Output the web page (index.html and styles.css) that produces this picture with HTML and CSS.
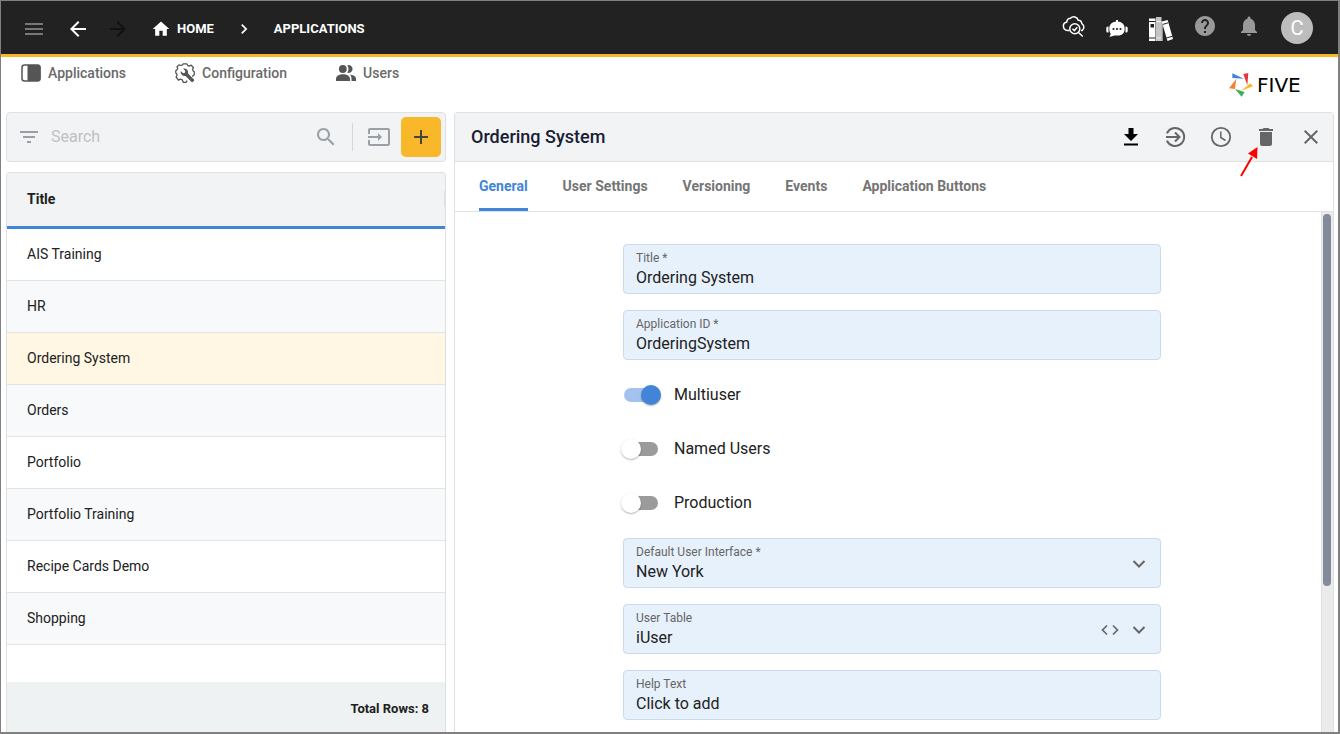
FILE: index.html
```html
<!DOCTYPE html>
<html lang="en">
<head>
    <meta charset="UTF-8">
    <meta name="viewport" content="width=device-width, initial-scale=1.0">
    <title>Applications | Five</title>
    <link rel="stylesheet" href="styles.css">
</head>
<body>
    <header class="topbar">
        <button class="icon-button menu-button" type="button" aria-label="Menu">
            <svg class="icon" viewBox="0 0 24 24"><path d="M3 18h18v-2H3v2zm0-5h18v-2H3v2zm0-7v2h18V6H3z"/></svg>
        </button>
        <button class="icon-button back-button" type="button" aria-label="Back">
            <svg class="icon" viewBox="0 0 24 24"><path d="M20 11H7.83l5.59-5.59L12 4l-8 8 8 8 1.41-1.41L7.83 13H20v-2z"/></svg>
        </button>
        <button class="icon-button forward-button" type="button" aria-label="Forward" disabled>
            <svg class="icon" viewBox="0 0 24 24"><path d="M12 4l-1.41 1.41L16.17 11H4v2h12.17l-5.58 5.59L12 20l8-8z"/></svg>
        </button>

        <nav class="breadcrumbs" aria-label="Breadcrumb">
            <a href="#">
                <svg class="icon icon-small" viewBox="0 0 24 24"><path d="M10 20v-6h4v6h5v-8h3L12 3 2 12h3v8z"/></svg>
                HOME
            </a>
            <svg class="icon icon-small" viewBox="0 0 24 24"><path d="M10 6L8.59 7.41 13.17 12l-4.58 4.59L10 18l6-6z"/></svg>
            <a href="#">APPLICATIONS</a>
        </nav>

        <div class="topbar-actions">
            <button class="icon-button" type="button" aria-label="Inspect">
                <svg class="icon icon-line icon-raised" viewBox="0 0 24 24">
                    <path d="M8.500 16.500H6.500a4.300 4.300 0 0 1-.7-8.500A3.700 3.700 0 0 1 9.500 4.200 4.600 4.600 0 0 1 17.200 6.200a3.300 3.300 0 0 1 3.600 3.400 4 4 0 0 1 .2 6.900h-1"/>
                    <circle cx="13.800" cy="14.800" r="5"/>
                    <path d="M11.500 14.800l1.800 1.800 3-3.400M17.500 18.500l4.300 4"/>
                </svg>
            </button>
            <button class="icon-button" type="button" aria-label="Chat assistant">
                <svg class="icon" viewBox="0 0 24 24">
                    <path d="M11 4h2v3h-2zM3.500 10.500v6H2.800a1.500 1.500 0 0 1-1.500-1.500v-3a1.500 1.500 0 0 1 1.500-1.500zM20.500 10.500v6h.7a1.500 1.500 0 0 0 1.500-1.500v-3a1.500 1.500 0 0 0-1.500-1.500z"/>
                    <path d="M12 5.500c5 0 7.700 3 7.700 7.200 0 4-2.500 6.800-6.700 6.800H9.500L4.500 21l1.300-3.300C4.700 16.500 4.300 15 4.300 12.700 4.300 8.500 7 5.500 12 5.500z"/>
                    <g fill="#222"><circle cx="8.500" cy="13" r="1.100"/><circle cx="12" cy="13" r="1.100"/><circle cx="15.500" cy="13" r="1.100"/></g>
                </svg>
            </button>
            <button class="icon-button" type="button" aria-label="Library">
                <svg class="icon books-icon" viewBox="0 0 24 24">
                    <path d="M0 1.500h6.500V24H0z"/>
                    <path fill="#c4c4c4" d="M7 0h5.500v24H7z"/>
                    <path d="M12.700 4.500l6-1.500L24 22l-5.500 2z"/>
                    <path fill="none" stroke="#222" d="M0 4.500h6.500M0 21h6.500M13.500 7.500l6-1.800M17.500 21l6-1.800"/>
                    <path fill="#222" d="M1.500 7h3.500v3.500H1.500z"/>
                    <path d="M12.500 4v20h1V6z"/>
                    <path fill="none" stroke="#fff" stroke-width=".8" d="M7.400 4.500h4.700M7.400 21h4.700"/>
                </svg>
            </button>
            <button class="icon-button muted" type="button" aria-label="Help">
                <svg class="icon icon-raised" viewBox="0 0 24 24"><path d="M12 2C6.480 2 2 6.480 2 12s4.480 10 10 10 10-4.480 10-10S17.520 2 12 2zm1 17h-2v-2h2v2zm2.070-7.750l-.9.920C13.450 12.900 13 13.500 13 15h-2v-.5c0-1.100.45-2.100 1.170-2.830l1.240-1.260c.37-.36.59-.86.59-1.410 0-1.100-.9-2-2-2s-2 .9-2 2H8c0-2.210 1.790-4 4-4s4 1.790 4 4c0 .88-.36 1.680-.93 2.250z"/></svg>
            </button>
            <button class="icon-button muted" type="button" aria-label="Notifications">
                <svg class="icon icon-raised" viewBox="0 0 24 24"><path d="M12 22c1.100 0 2-.9 2-2h-4c0 1.100.89 2 2 2zm6-6v-5c0-3.070-1.640-5.640-4.500-6.320V4c0-.83-.67-1.500-1.500-1.500s-1.500.67-1.500 1.500v.68C7.630 5.360 6 7.920 6 11v5l-2 2v1h16v-1l-2-2z"/></svg>
            </button>
            <button class="avatar" type="button" aria-label="Account">C</button>
        </div>
    </header>

    <div class="subbar">
        <nav class="main-nav" aria-label="Main">
            <a href="#">
                <svg class="icon icon-small" viewBox="0 0 20 20"><rect x="1" y="2" width="18" height="16" rx="2.500" fill="none" stroke="currentColor" stroke-width="1.500"/><path d="M6.500 2H17.500a2 2 0 0 1 2 2v12a2 2 0 0 1-2 2h-11z"/></svg>
                Applications
            </a>
            <a href="#">
                <svg class="icon icon-small" viewBox="0 0 20 20">
                    <path fill="none" stroke="currentColor" stroke-width="1.300" stroke-linejoin="round" d="M12 17.500l-.7 1.800H8.200l-.7-2.200-2-.9-2.100 1L1.100 14l1-2-.5-1.300L.8 10V7.800L2.300 6.500l.4-1-.7-1.700L4 1.900l2 .6 1.500-.7.7-1h3.600l.8 1.500 1.600.8 2-.9 2.200 2.300-.8 2 .6 1.400 1.100.9v3l-1.300.8-.4 1.300"/>
                    <path d="M8 5.600a4 4 0 0 1 5 4.900l5.800 5.800a1.200 1.200 0 0 1 0 1.700l-.8.8a1.200 1.200 0 0 1-1.700 0l-5.800-5.800A4 4 0 0 1 5.800 8l2.300 2.300 1.800-.5.400-1.800z"/>
                </svg>
                Configuration
            </a>
            <a href="#">
                <svg class="icon icon-small" viewBox="0 0 20 20"><circle cx="6.800" cy="6" r="3.900"/><path d="M0 18v-2.300C0 12.600 4 11.200 7 11.200s7 1.400 7 4.500V18zM11.200 9.600a3.900 3.900 0 1 0 0-7.200 6 6 0 0 1 0 7.200zM13.800 11.400c2.800.3 6.200 1.600 6.200 4.300V18h-4.500v-2.300c0-1.900-.6-3.200-1.700-4.300z"/></svg>
                Users
            </a>
        </nav>
        <a class="brand" href="#">
            <svg class="brand-mark" viewBox="0 0 72 72" aria-hidden="true">
                <polygon fill="#4285d8" points="10,1 10,15 45,17"/>
                <polygon fill="#e8343c" points="43,3 58,0 55,37"/>
                <polygon fill="#fbb62b" points="64,31 72,40 36,53"/>
                <polygon fill="#3fad58" points="18,48 47,57 38,71"/>
                <polygon fill="#f58232" points="22,17 18,48 0,46"/>
            </svg>
            <span class="brand-name">FIVE</span>
        </a>
    </div>

    <main class="workspace">
        <section class="list-column">
            <form class="search-bar" role="search">
                <button class="icon-button" type="button" aria-label="Filter">
                    <svg class="icon" viewBox="0 0 24 24"><path d="M10 18h4v-2h-4v2zM3 6v2h18V6H3zm3 7h12v-2H6v2z"/></svg>
                </button>
                <input class="search-input" type="text" placeholder="Search" aria-label="Search">
                <button class="icon-button" type="submit" aria-label="Run search">
                    <svg class="icon" viewBox="0 0 24 24"><path d="M15.500 14h-.79l-.28-.27C15.410 12.590 16 11.110 16 9.500 16 5.910 13.090 3 9.500 3S3 5.910 3 9.500 5.910 16 9.500 16c1.610 0 3.090-.59 4.230-1.570l.27.28v.79l5 4.990L20.490 19l-4.990-5zm-6 0C7.010 14 5 11.990 5 9.500S7.010 5 9.500 5 14 7.010 14 9.500 11.990 14 9.500 14z"/></svg>
                </button>
                <span class="divider"></span>
                <button class="icon-button" type="button" aria-label="Import">
                    <svg class="icon" viewBox="0 0 24 24"><path d="M21 3.010H3c-1.100 0-2 .9-2 2V9h2V4.990h18v14.030H3V15H1v4.010c0 1.100.9 1.980 2 1.980h18c1.100 0 2-.88 2-1.980v-14c0-1.110-.9-2-2-2zM11 16l4-4-4-4v3H1v2h10v3z"/></svg>
                </button>
                <button class="add-button" type="button" aria-label="Add">
                    <svg class="icon" viewBox="0 0 24 24"><path d="M19 13h-6v6h-2v-6H5v-2h6V5h2v6h6v2z"/></svg>
                </button>
            </form>

            <div class="list-card">
                <table class="list-table">
                    <thead>
                        <tr><th scope="col"><div class="column-title">Title</div></th></tr>
                    </thead>
                    <tbody>
                        <tr><td>AIS Training</td></tr>
                        <tr><td>HR</td></tr>
                        <tr class="selected"><td>Ordering System</td></tr>
                        <tr><td>Orders</td></tr>
                        <tr><td>Portfolio</td></tr>
                        <tr><td>Portfolio Training</td></tr>
                        <tr><td>Recipe Cards Demo</td></tr>
                        <tr><td>Shopping</td></tr>
                    </tbody>
                </table>
                <div class="list-footer">Total Rows: 8</div>
            </div>
        </section>

        <section class="detail-card">
            <div class="detail-header">
                <h1>Ordering System</h1>
                <div class="detail-actions">
                    <button class="icon-button download-button" type="button" aria-label="Download">
                        <svg class="icon" viewBox="0 0 24 24"><path d="M9.500 3h5v6H19l-7 7-7-7h4.500zM5 18.500h14v2H5z"/></svg>
                    </button>
                    <button class="icon-button" type="button" aria-label="Run">
                        <svg class="icon icon-line" viewBox="0 0 24 24"><path stroke-width="2" d="M2.900 8.400a9 9 0 1 1 0 7.200M2 12h13M11 7.500l4.500 4.500-4.500 4.500"/></svg>
                    </button>
                    <button class="icon-button" type="button" aria-label="History">
                        <svg class="icon icon-line" viewBox="0 0 24 24"><circle cx="12" cy="12" r="9.200" stroke-width="1.800"/><path d="M11.800 6.500v6l4.700 3"/></svg>
                    </button>
                    <div class="delete-action">
                        <button class="icon-button" type="button" aria-label="Delete">
                            <svg class="icon" viewBox="0 0 24 24"><path d="M6 19c0 1.100.9 2 2 2h8c1.100 0 2-.9 2-2V7H6v12zM19 4h-3.500l-1-1h-5l-1 1H5v2h14V4z"/></svg>
                        </button>
                        <svg class="pointer" viewBox="0 0 18 30" aria-hidden="true"><path d="M1 29L12 10" stroke="#f00" stroke-width="2"/><polygon fill="#f00" points="17.500,0 8,6.500 17,12"/></svg>
                    </div>
                    <button class="icon-button" type="button" aria-label="Close">
                        <svg class="icon" viewBox="0 0 24 24"><path d="M19 6.410L17.590 5 12 10.590 6.410 5 5 6.410 10.590 12 5 17.590 6.410 19 12 13.410 17.590 19 19 17.590 13.410 12z"/></svg>
                    </button>
                </div>
            </div>

            <div class="tabs" role="tablist">
                <button class="tab active" type="button" role="tab" aria-selected="true">General</button>
                <button class="tab" type="button" role="tab">User Settings</button>
                <button class="tab" type="button" role="tab">Versioning</button>
                <button class="tab" type="button" role="tab">Events</button>
                <button class="tab" type="button" role="tab">Application Buttons</button>
            </div>

            <div class="detail-body">
                <div class="form-scroll">
                    <form class="detail-form">
                        <div class="field">
                            <div class="field-main">
                                <label for="title">Title *</label>
                                <input type="text" id="title" name="title" value="Ordering System">
                            </div>
                        </div>
                        <div class="field">
                            <div class="field-main">
                                <label for="app_id">Application ID *</label>
                                <input type="text" id="app_id" name="app_id" value="OrderingSystem">
                            </div>
                        </div>

                        <label class="switch"><input type="checkbox" name="multiuser" checked><span>Multiuser</span></label>
                        <label class="switch"><input type="checkbox" name="named_users"><span>Named Users</span></label>
                        <label class="switch"><input type="checkbox" name="production"><span>Production</span></label>

                        <div class="field">
                            <div class="field-main">
                                <label for="default_ui">Default User Interface *</label>
                                <select id="default_ui" name="default_ui"><option>New York</option></select>
                            </div>
                            <svg class="icon icon-line icon-small" viewBox="0 0 20 20"><path stroke-width="2" d="M4.500 7l5.500 5.500L15.500 7"/></svg>
                        </div>
                        <div class="field">
                            <div class="field-main">
                                <label for="user_table">User Table</label>
                                <select id="user_table" name="user_table"><option>iUser</option></select>
                            </div>
                            <button class="icon-button" type="button" aria-label="Edit code">
                                <svg class="icon icon-line icon-small" viewBox="0 0 20 20"><path stroke-width="1.700" d="M7 5.500L2.500 10 7 14.500M13 5.500l4.500 4.500-4.500 4.500"/></svg>
                            </button>
                            <svg class="icon icon-line icon-small" viewBox="0 0 20 20"><path stroke-width="2" d="M4.500 7l5.500 5.500L15.500 7"/></svg>
                        </div>
                        <div class="field">
                            <div class="field-main">
                                <label for="help_text">Help Text</label>
                                <input type="text" id="help_text" name="help_text" value="Click to add">
                            </div>
                        </div>
                    </form>
                </div>
                <div class="scroll-track"><div class="scroll-thumb"></div></div>
            </div>
        </section>
    </main>
</body>
</html>
```

FILE: styles.css
```css
/* General Reset */
* {
    margin: 0;
    padding: 0;
    box-sizing: border-box;
}

body {
    font-family: Roboto, sans-serif;
    font-size: 14px;
    color: #212121;
    background: #fff;
    height: 100vh;
    display: flex;
    flex-direction: column;
    border: 1px solid #808080;
    border-right-width: 2px;
    border-bottom-width: 2px;
    overflow: hidden;
}

button,
input,
select {
    font: inherit;
    color: inherit;
    background: none;
    border: none;
    outline: none;
}

button {
    cursor: pointer;
}

a {
    color: inherit;
    text-decoration: none;
}

/* Icons */
.icon {
    display: block;
    width: 24px;
    height: 24px;
    fill: currentColor;
    flex: none;
}

.icon-small {
    width: 20px;
    height: 20px;
}

.icon-line {
    fill: none;
    stroke: currentColor;
    stroke-width: 1.5;
}

.icon-button {
    display: flex;
    flex: none;
}

/* Top bar */
.topbar {
    flex: none;
    height: 56px;
    padding: 0 25px 0 21px;
    display: flex;
    align-items: center;
    background: #222;
    color: #fff;
    border-bottom: 3px solid #f8b82a;
}

.menu-button {
    color: #777;
    margin-right: 20px;
}

.back-button {
    margin-right: 16px;
}

.forward-button {
    color: #111;
    margin-right: 21px;
}

.topbar > .icon-button,
.breadcrumbs {
    padding-top: 2px;
}

.breadcrumbs {
    display: flex;
    align-items: center;
    gap: 20px;
    font-size: 13px;
    font-weight: 700;
}

.breadcrumbs a {
    display: flex;
    align-items: center;
    gap: 6px;
}

.topbar-actions {
    margin-left: auto;
    display: flex;
    align-items: center;
    gap: 20px;
}

.muted {
    color: #999;
}

.icon-raised {
    margin-bottom: 3px;
}

.books-icon {
    margin-top: 2px;
}

.avatar {
    width: 32px;
    height: 32px;
    border-radius: 50%;
    background: #bdbdbd;
    font-size: 20px;
    line-height: 32px;
}

/* Navigation and brand */
.subbar {
    flex: none;
    height: 55px;
    padding: 6px 21px 0 20px;
    display: flex;
    justify-content: space-between;
    align-items: flex-start;
}

.main-nav {
    display: flex;
    gap: 49px;
    font-weight: 500;
    color: #6a6a6a;
}

.main-nav a {
    display: flex;
    align-items: center;
    gap: 7px;
    line-height: 20px;
}

.main-nav .icon {
    color: #555;
}

.brand {
    display: flex;
    align-items: center;
    gap: 4px;
    padding-top: 10px;
}

.brand-mark {
    width: 24px;
    height: 24px;
}

.brand-name {
    min-width: 60px;
    font-family: "DejaVu Sans", sans-serif;
    font-size: 20px;
    line-height: 24px;
    color: #000;
}

/* Workspace */
.workspace {
    flex: 1;
    min-height: 0;
    display: grid;
    grid-template-columns: 1fr 2fr;
    grid-template-rows: 100%;
    gap: 8px;
    padding: 0 4px 0 5px;
}

.list-column {
    display: flex;
    flex-direction: column;
    gap: 10px;
}

.search-bar {
    height: 50px;
    padding: 0 4px 0 10px;
    display: flex;
    align-items: center;
    background: #f1f3f4;
    border: 1px solid #dfe0e1;
    border-radius: 4px;
    color: #9aa0a6;
}

.search-input {
    flex: 1;
    min-width: 0;
    padding: 0 0 2px 10px;
    font-size: 16px;
    color: #212121;
}

.search-input::placeholder {
    color: #bfc1c3;
    opacity: 1;
}

.divider {
    width: 1px;
    height: 28px;
    margin: 0 14px;
    background: #d5d7d9;
}

.add-button {
    width: 40px;
    height: 40px;
    margin-left: 10px;
    display: flex;
    align-items: center;
    justify-content: center;
    background: #f8b82a;
    border-radius: 5px;
    color: #444;
}

.list-card {
    flex: 1;
    display: flex;
    flex-direction: column;
    border: 1px solid #dfe0e1;
    border-bottom: none;
    border-radius: 4px 4px 0 0;
    overflow: hidden;
}

.list-table {
    width: 100%;
    border-spacing: 0;
    text-align: left;
}

.list-table th {
    height: 56px;
    padding: 0 0 2px 20px;
    background: #f1f3f4;
    border-bottom: 3px solid #4285d8;
    font-weight: 700;
}

.column-title {
    line-height: 16px;
    border-right: 1px solid #dfe0e1;
}

.list-table td {
    height: 52px;
    padding: 0 0 2px 20px;
    border-bottom: 1px solid #e3e4e5;
}

.list-table tbody tr:nth-child(even) {
    background: #f8f9fb;
}

.list-table tbody .selected {
    background: #fff6e3;
}

.list-footer {
    height: 50px;
    margin-top: auto;
    padding: 2px 16px 0 0;
    display: flex;
    align-items: center;
    justify-content: flex-end;
    background: #eef2f3;
    font-size: 13px;
    font-weight: 700;
}

/* Detail card */
.detail-card {
    min-width: 0;
    display: flex;
    flex-direction: column;
    border: 1px solid #dfe0e1;
    border-bottom: none;
    border-radius: 4px 4px 0 0;
}

.detail-header {
    flex: none;
    height: 49px;
    padding: 0 10px 0 16px;
    display: flex;
    align-items: center;
    justify-content: space-between;
    background: #f1f3f4;
    border-bottom: 1px solid #dfe0e1;
}

.detail-header h1 {
    padding-bottom: 2px;
    font-size: 18px;
    font-weight: 500;
    color: #182033;
}

.detail-actions {
    display: flex;
    gap: 21px;
    color: #666;
}

.download-button {
    color: #000;
}

.delete-action {
    position: relative;
}

.pointer {
    position: absolute;
    top: 22px;
    right: 20px;
    width: 18px;
    height: 30px;
    overflow: visible;
}

.tabs {
    flex: none;
    height: 50px;
    padding: 0 24px;
    display: flex;
    gap: 35px;
    border-bottom: 1px solid #dfe0e1;
    color: #757575;
}

.tab {
    padding-top: 1px;
    border-bottom: 3px solid transparent;
    font-weight: 700;
}

.tab.active {
    color: #4285d8;
    border-bottom-color: #4285d8;
}

.detail-body {
    flex: 1;
    min-height: 0;
    display: flex;
}

.form-scroll {
    flex: 1;
    overflow: auto;
    scrollbar-width: none;
    padding: 32px 16px 16px 24px;
}

.scroll-track {
    width: 12px;
    padding: 2px;
    padding-left: 1px;
    background: #ebebeb;
    border-left: 1px solid #dfe0e1;
}

.scroll-thumb {
    height: 72%;
    background: #838a9c;
    border-radius: 4px;
}

.detail-form {
    max-width: 538px;
    margin: 0 auto;
    display: flex;
    flex-direction: column;
    gap: 16px;
    font-size: 16px;
}

.field {
    height: 50px;
    padding: 2px 11px 0 12px;
    display: flex;
    align-items: center;
    gap: 9px;
    background: #e7f1fc;
    border: 1px solid #c9dcee;
    border-radius: 4px;
    color: #212121;
}

.field-main {
    flex: 1;
    display: flex;
    flex-direction: column;
}

.field label {
    font-size: 12px;
    line-height: 16px;
    color: #666;
}

.field input,
.field select {
    appearance: none;
    width: 100%;
    height: 24px;
    line-height: 24px;
}

.field .icon {
    color: #666;
}

/* Switches */
.switch {
    height: 38px;
    display: flex;
    align-items: center;
    gap: 16px;
}

.switch span {
    padding-bottom: 2px;
}

.switch input {
    appearance: none;
    width: 34px;
    height: 14px;
    margin-left: 1px;
    border-radius: 7px;
    background: #9b9b9b;
    display: flex;
    align-items: center;
}

.switch input::before {
    content: "";
    width: 20px;
    height: 20px;
    flex: none;
    margin-left: -3px;
    border-radius: 50%;
    background: #fff;
    box-shadow: 0 1px 2px rgba(0, 0, 0, 0.3);
}

.switch input:checked {
    background: #a3c3ee;
}

.switch input:checked::before {
    margin-left: 17px;
    background: #4285d8;
}
```
